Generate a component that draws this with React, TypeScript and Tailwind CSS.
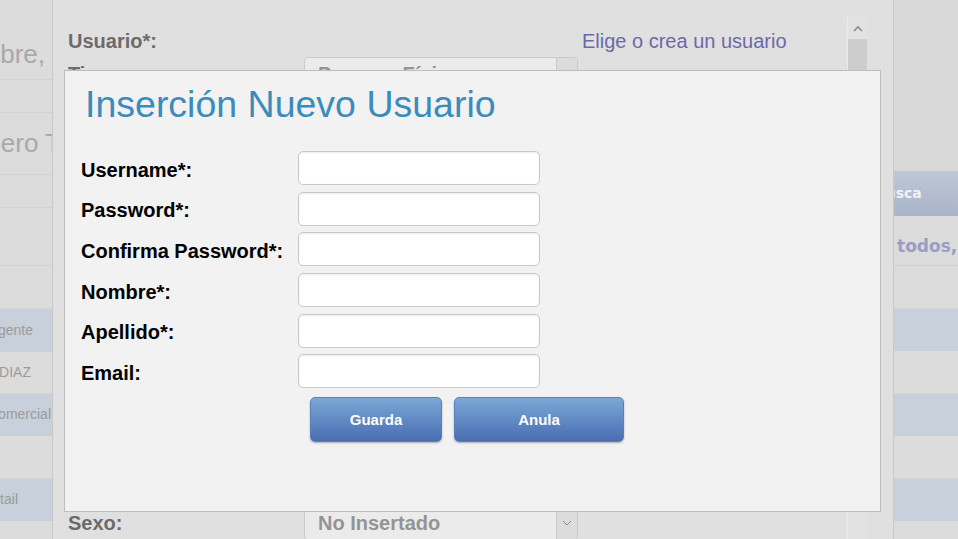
import React from 'react';

const font = { fontFamily: '"Liberation Sans", Arial, sans-serif' };

type Row = { h: string; blue?: boolean; text?: React.ReactNode };

const leftRows: Row[] = [
  {
    h: 'h-[80px]',
    text: <span className="pt-[39px] pr-[7px] text-[26px] leading-[30px] text-[#a9a9a9]">Nombre,</span>,
  },
  { h: 'h-[33px]' },
  {
    h: 'h-[62px]',
    text: <span className="pt-[15px] mr-[-9px] text-[26px] leading-[30px] text-[#a9a9a9]">Numero T</span>,
  },
  { h: 'h-[33px]' },
  { h: 'h-[58px]' },
  { h: 'h-[43px]' },
  { h: 'h-[43px]', blue: true, text: <span className="self-center pr-[19px]">Agente</span> },
  { h: 'h-[42px]', text: <span className="self-center pr-[21px]">DIAZ</span> },
  { h: 'h-[42px]', blue: true, text: <span className="self-center pr-[1px]">Comercial</span> },
  { h: 'h-[43px]' },
  { h: 'h-[42px]', blue: true, text: <span className="self-center pr-[34px]">Retail</span> },
  { h: 'h-[40px]' },
];

const rightRows: Row[] = [
  { h: 'h-[43px]' },
  { h: 'h-[42px]', blue: true },
  { h: 'h-[43px]' },
  { h: 'h-[42px]', blue: true },
  { h: 'h-[43px]' },
  { h: 'h-[42px]', blue: true },
  { h: 'h-[40px]' },
];

const fields = ['Username*:', 'Password*:', 'Confirma Password*:', 'Nombre*:', 'Apellido*:', 'Email:'];

function SelectBox({ text }: { text: string }) {
  return (
    <div className="flex h-[34px] w-[274px] rounded-[4px] border border-[#c9c9c9] bg-[#ebebeb]">
      <div className="flex flex-1 items-center pl-[13px] text-[20px] font-bold text-[#949494]">{text}</div>
      <div className="flex w-[21px] items-center justify-center rounded-r-[4px] border-l border-[#c9c9c9] bg-[#dcdcdc]">
        <svg width="10" height="6" viewBox="0 0 10 6" fill="none" stroke="#8a8a8a" strokeWidth="1">
          <path d="M1 1l4 4 4-4" />
        </svg>
      </div>
    </div>
  );
}

export default function App() {
  return (
    <div className="relative flex h-[539px] w-[958px] overflow-hidden bg-[#e0e0e0]" style={font}>
      {/* left list */}
      <div className="flex w-[53px] shrink-0 flex-col overflow-hidden border-r border-[#c8c8c8] text-[14px] text-[#9b9b9b]">
        {leftRows.map((r, i) => (
          <div
            key={i}
            className={`flex shrink-0 justify-end whitespace-nowrap border-b ${r.h} ${
              r.blue ? 'border-[#c8d0db] bg-[#c8d0db]' : 'border-[#d3d3d3] bg-[#dcdcdc]'
            }`}
          >
            {r.text}
          </div>
        ))}
      </div>

      {/* middle form */}
      <div className="flex w-[840px] shrink-0 overflow-hidden bg-[#e0e0e0]">
        <div className="flex flex-1 flex-col pl-[15px] pt-[30px] text-[20px]">
          <div className="flex h-[22px] items-center">
            <div className="w-[236px] font-bold text-[#6b6b6b]">Usuario*:</div>
            <div className="w-[278px]" />
            <div className="text-[#6b69a9]">Elige o crea un usuario</div>
          </div>
          <div className="mt-[5px] flex h-[34px] items-center">
            <div className="w-[236px] font-bold text-[#6b6b6b]">Tipo:</div>
            <SelectBox text="Persona Física" />
          </div>
          <div className="mt-auto mb-[-1px] flex h-[34px] items-center">
            <div className="w-[236px] font-bold text-[#6b6b6b]">Sexo:</div>
            <SelectBox text="No Insertado" />
          </div>
        </div>
        <div className="mt-[17px] flex w-[20px] flex-col border-l border-[#ebebeb] bg-[#e2e2e2]">
          <div className="flex h-[22px] items-center justify-center">
            <svg width="10" height="7" viewBox="0 0 10 7" fill="none" stroke="#8c8c8c" strokeWidth="1.6">
              <path d="M1 6l4-4 4 4" />
            </svg>
          </div>
          <div className="h-[300px] bg-[#cdcdcd]" />
        </div>
        <div className="w-[26px]" />
      </div>

      {/* right list */}
      <div className="flex w-[65px] shrink-0 flex-col overflow-hidden border-l border-[#c8c8c8] bg-[#d8d8d8]">
        <div className="h-[171px] shrink-0" />
        <div className="flex h-[45px] shrink-0 items-center bg-gradient-to-b from-[#bec8d6] to-[#a9b4c8] whitespace-nowrap">
          <span className="ml-[-19px] text-[14px] font-bold text-[#f0f2f6]" style={{ fontFamily: '"DejaVu Sans", Verdana, sans-serif' }}>
            Busca
          </span>
        </div>
        <div className="h-[50px] shrink-0 border-b border-[#cfcfcf] bg-[#dcdcdc] pl-[3px] pt-[18px] whitespace-nowrap">
          <span className="text-[17px] font-bold text-[#9b9dc4]" style={{ fontFamily: '"DejaVu Sans", Verdana, sans-serif' }}>
            todos, los
          </span>
        </div>
        {rightRows.map((r, i) => (
          <div
            key={i}
            className={`shrink-0 border-b ${r.h} ${
              r.blue ? 'border-[#c8d0db] bg-[#c8d0db]' : 'border-[#d3d3d3] bg-[#dcdcdc]'
            }`}
          />
        ))}
      </div>

      {/* modal */}
      <div className="absolute left-[64px] top-[70px] h-[442px] w-[817px] border border-[#bdbdbd] bg-[#f2f2f2]">
        <h1 className="pl-[20px] pt-[12px] text-[37.5px] leading-[42px] text-[#3b8bbb]">Inserción Nuevo Usuario</h1>
        <div className="mt-[26px] grid grid-cols-[217px_242px] gap-y-[6.7px] pl-[16px]">
          {fields.map((f) => (
            <React.Fragment key={f}>
              <div className="flex h-[34px] items-center pt-[3px] text-[20px] font-bold text-black">{f}</div>
              <input
                type={f.startsWith('Password') || f.startsWith('Confirma') ? 'password' : 'text'}
                className="h-[34px] rounded-[5px] border border-[#c9c9c9] bg-white shadow-[inset_0_1px_2px_rgba(0,0,0,0.08)] outline-none"
              />
            </React.Fragment>
          ))}
        </div>
        <div className="ml-[245px] mt-[9px] flex gap-[12px]">
          <button className="h-[45px] w-[132px] rounded-[5px] border border-[#5a80bd] bg-gradient-to-b from-[#7ba8d7] to-[#4a6db1] text-[15px] font-bold text-white shadow-[0_1px_2px_rgba(0,0,0,0.3)]">
            Guarda
          </button>
          <button className="h-[45px] w-[170px] rounded-[5px] border border-[#5a80bd] bg-gradient-to-b from-[#7ba8d7] to-[#4a6db1] text-[15px] font-bold text-white shadow-[0_1px_2px_rgba(0,0,0,0.3)]">
            Anula
          </button>
        </div>
      </div>
    </div>
  );
}
